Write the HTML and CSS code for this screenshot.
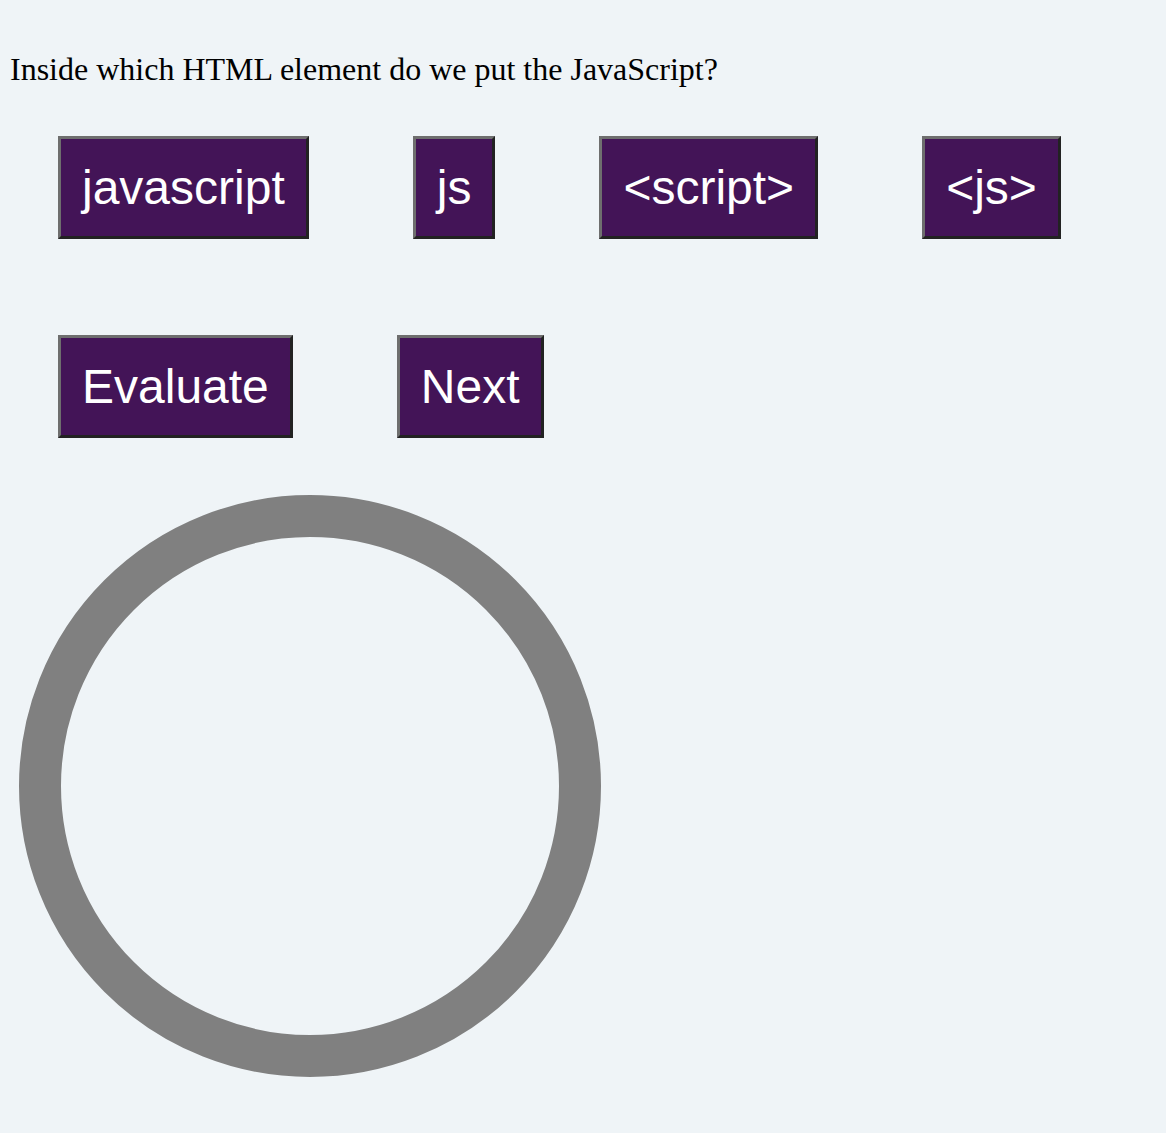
FILE: index.html
```html
<!DOCTYPE html>
<html>
<head>
<meta charset="utf-8">
<link rel="stylesheet" href="styles.css">
</head>
<body>
<p class="question">Inside which HTML element do we put the JavaScript?</p>
<div class="row options">
  <button class="btn">javascript</button>
  <button class="btn">js</button>
  <button class="btn">&lt;script&gt;</button>
  <button class="btn">&lt;js&gt;</button>
</div>
<div class="row actions">
  <button class="btn">Evaluate</button>
  <button class="btn">Next</button>
</div>
<div class="timer">
  <svg width="582" height="582" viewBox="0 0 582 582">
    <circle cx="291" cy="291" r="270" fill="none" stroke="#808080" stroke-width="42"/>
  </svg>
</div>
</body>
</html>
```
FILE: styles.css
```css
html, body {
  background: #eff4f7;
}
body {
  margin: 8px;
  font-family: "Liberation Serif", "Times New Roman", serif;
}
.question {
  margin: 43px 0 0 0;
  padding-left: 2px;
  font-size: 32px;
  line-height: 37px;
  color: #000;
}
.row {
  display: flex;
  align-items: flex-start;
  gap: 104px;
  padding-left: 50px;
}
.options {
  margin-top: 48px;
}
.actions {
  margin-top: 96px;
}
.btn {
  font-family: "Liberation Sans", Arial, sans-serif;
  font-size: 48px;
  line-height: 55px;
  color: #fff;
  background: #431457;
  border: 3px solid;
  border-color: #6e6e6e #222 #222 #6e6e6e;
  padding: 21px;
  margin: 0;
  cursor: pointer;
}
.timer {
  margin: 57px 0 0 11px;
  width: 582px;
  height: 582px;
}
.timer svg {
  display: block;
}
```
